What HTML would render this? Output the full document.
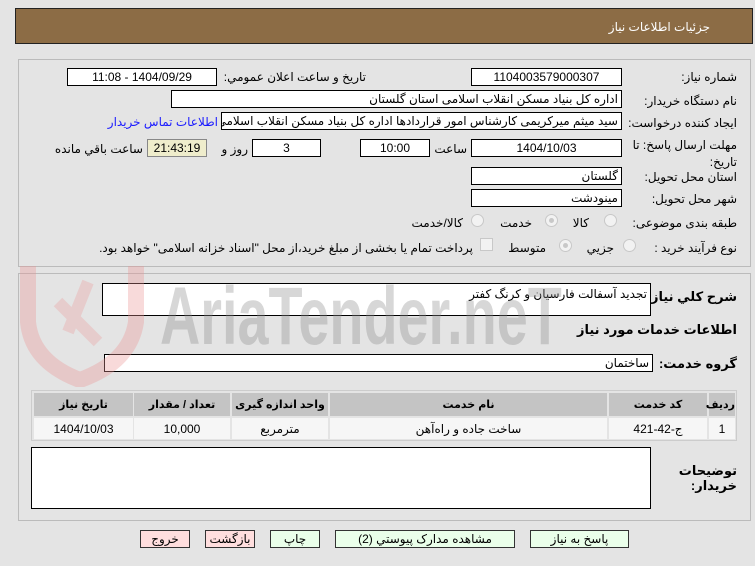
<!DOCTYPE html>
<html><head><meta charset="utf-8">
<style>
*{margin:0;padding:0;box-sizing:border-box}
body{width:755px;height:566px;background:#e4e4e4;position:relative;overflow:hidden;font-family:"Liberation Sans","DejaVu Sans",sans-serif;font-size:12px;color:#000}
.a{position:absolute}
.t{position:absolute;white-space:nowrap;direction:rtl;text-align:right}
.box{position:absolute;background:#fff;border:1px solid #000;white-space:nowrap;overflow:hidden;direction:rtl;font-size:12px;line-height:16px}
.c{text-align:center}
.r{padding-right:3px}
.rad{position:absolute;width:13px;height:13px;border-radius:50%;border:1px solid #c8c8c8;background:#f2f2f2}
.rad.on::after{content:"";position:absolute;left:3px;top:3px;width:5px;height:5px;border-radius:50%;background:#c8c8c8}
.btn{position:absolute;height:18px;border:1px solid #333;text-align:center;line-height:16px;font-size:12px;background:#eaffea;direction:rtl}
.btn.red{background:#ffdede}
</style></head><body>
<!-- header -->
<div class="a" style="left:15px;top:8px;width:738px;height:36px;background:#8c6c45;border:1px solid #222"></div>
<div class="t" style="right:45px;top:20px;color:#fff;font-size:12px">جزئيات اطلاعات نياز</div>

<!-- panel1 -->
<div class="a" style="left:18px;top:59px;width:733px;height:208px;border:1px solid #bbb"></div>

<div class="t" style="right:18px;top:70px">شماره نياز:</div>
<div class="box c" style="left:471px;top:68px;width:151px;height:18px">1104003579000307</div>
<div class="t" style="right:389px;top:70px">تاريخ و ساعت اعلان عمومي:</div>
<div class="box c" style="left:67px;top:68px;width:150px;height:18px">1404/09/29 - 11:08</div>

<div class="t" style="right:18px;top:94px">نام دستگاه خريدار:</div>
<div class="box r" style="left:171px;top:90px;width:451px;height:18px">اداره کل بنیاد مسکن انقلاب اسلامی استان گلستان</div>

<div class="t" style="right:18px;top:116px">ايجاد كننده درخواست:</div>
<div class="box r" style="left:221px;top:112px;width:401px;height:18px">سید میثم میرکریمی کارشناس امور قراردادها اداره کل بنیاد مسکن انقلاب اسلامی استان گلستان</div>
<div class="t" style="right:537px;top:115px;color:#1a1aff">اطلاعات تماس خريدار</div>

<div class="t" style="right:18px;top:137px;line-height:17px">مهلت ارسال پاسخ: تا<br>تاريخ:</div>
<div class="box c" style="left:471px;top:139px;width:151px;height:18px">1404/10/03</div>
<div class="t" style="right:288px;top:142px">ساعت</div>
<div class="box c" style="left:360px;top:139px;width:70px;height:18px">10:00</div>
<div class="box c" style="left:252px;top:139px;width:69px;height:18px">3</div>
<div class="t" style="right:507px;top:142px">روز و</div>
<div class="box c" style="left:147px;top:139px;width:60px;height:18px;background:#efedcc;border-color:#888">21:43:19</div>
<div class="t" style="right:612px;top:142px">ساعت باقي مانده</div>

<div class="t" style="right:18px;top:170px">استان محل تحويل:</div>
<div class="box r" style="left:471px;top:167px;width:151px;height:18px">گلستان</div>
<div class="t" style="right:18px;top:192px">شهر محل تحويل:</div>
<div class="box r" style="left:471px;top:189px;width:151px;height:18px">مينودشت</div>

<div class="t" style="right:18px;top:216px">طبقه بندی موضوعی:</div>
<div class="rad" style="left:604px;top:214px"></div>
<div class="t" style="right:166px;top:216px">كالا</div>
<div class="rad on" style="left:545px;top:214px"></div>
<div class="t" style="right:223px;top:216px">خدمت</div>
<div class="rad" style="left:471px;top:214px"></div>
<div class="t" style="right:292px;top:216px">كالا/خدمت</div>

<div class="t" style="right:18px;top:241px">نوع فرآيند خريد :</div>
<div class="rad" style="left:623px;top:239px"></div>
<div class="t" style="right:141px;top:241px">جزيي</div>
<div class="rad on" style="left:559px;top:239px"></div>
<div class="t" style="right:209px;top:241px">متوسط</div>
<div class="a" style="left:480px;top:238px;width:13px;height:13px;border:1px solid #c8c8c8;background:#f2f2f2"></div>
<div class="t" style="right:282px;top:241px">پرداخت تمام يا بخشی از مبلغ خريد،از محل "اسناد خزانه اسلامی" خواهد بود.</div>

<!-- panel2 -->
<div class="a" style="left:18px;top:273px;width:733px;height:248px;border:1px solid #bbb"></div>
<div class="t" style="right:18px;top:289px;font-weight:bold;font-size:13px">شرح كلي نياز:</div>
<div class="box" style="left:102px;top:283px;width:549px;height:33px;padding-right:3px;line-height:20px">تجدید آسفالت فارسیان و کرنگ کفتر</div>
<div class="t" style="right:18px;top:322px;font-weight:bold;font-size:13px">اطلاعات خدمات مورد نياز</div>
<div class="t" style="right:18px;top:356px;font-weight:bold;font-size:13px">گروه خدمت:</div>
<div class="box r" style="left:104px;top:354px;width:549px;height:18px">ساختمان</div>

<div class="a" style="left:31px;top:390px;width:706px;height:51px;border:1px solid #ccc;background:#e4e4e4"></div>
<div class="a" style="left:34px;top:393px;width:99px;height:23px;background:#c4c4c4"></div>
<div class="a" style="left:134px;top:393px;width:96px;height:23px;background:#c4c4c4"></div>
<div class="a" style="left:232px;top:393px;width:96px;height:23px;background:#c4c4c4"></div>
<div class="a" style="left:330px;top:393px;width:277px;height:23px;background:#c4c4c4"></div>
<div class="a" style="left:609px;top:393px;width:98px;height:23px;background:#c4c4c4"></div>
<div class="a" style="left:709px;top:393px;width:26px;height:23px;background:#c4c4c4"></div>
<div class="a" style="left:34px;top:418px;width:99px;height:21px;background:#f6f6f6"></div>
<div class="a" style="left:134px;top:418px;width:96px;height:21px;background:#f6f6f6"></div>
<div class="a" style="left:232px;top:418px;width:96px;height:21px;background:#f6f6f6"></div>
<div class="a" style="left:330px;top:418px;width:277px;height:21px;background:#f6f6f6"></div>
<div class="a" style="left:609px;top:418px;width:98px;height:21px;background:#f6f6f6"></div>
<div class="a" style="left:709px;top:418px;width:26px;height:21px;background:#f6f6f6"></div>
<div class="a c" style="left:34px;top:398px;width:99px;font-weight:bold;font-size:11px;direction:rtl">تاريخ نياز</div>
<div class="a c" style="left:134px;top:398px;width:96px;font-weight:bold;font-size:11px;direction:rtl">تعداد / مقدار</div>
<div class="a c" style="left:232px;top:398px;width:96px;font-weight:bold;font-size:11px;direction:rtl">واحد اندازه گيری</div>
<div class="a c" style="left:330px;top:398px;width:277px;font-weight:bold;font-size:11px;direction:rtl">نام خدمت</div>
<div class="a c" style="left:609px;top:398px;width:98px;font-weight:bold;font-size:11px;direction:rtl">کد خدمت</div>
<div class="a c" style="left:709px;top:398px;width:26px;font-weight:bold;font-size:11px;direction:rtl">رديف</div>
<div class="a c" style="left:34px;top:422px;width:99px">1404/10/03</div>
<div class="a c" style="left:134px;top:422px;width:96px">10,000</div>
<div class="a c" style="left:232px;top:422px;width:96px;direction:rtl">مترمربع</div>
<div class="a c" style="left:330px;top:422px;width:277px;direction:rtl">ساخت جاده و راه‌آهن</div>
<div class="a c" style="left:609px;top:422px;width:98px;direction:rtl">ج-42-421</div>
<div class="a c" style="left:709px;top:422px;width:26px">1</div>

<div class="box" style="left:31px;top:447px;width:620px;height:62px"></div>
<div class="t" style="right:18px;top:463px;font-weight:bold;font-size:13px;line-height:15px;text-align:right">توضيحات<br>خريدار:</div>

<!-- watermark -->
<svg class="a" style="left:18px;top:262px" width="130" height="125" viewBox="0 0 130 125">
<path d="M10 4 L10 60 Q14 100 62 118 Q112 100 118 60 L118 4" fill="none" stroke="rgba(235,150,150,0.35)" stroke-width="16"/>
<path d="M40 40 L80 80 M70 20 L50 70" stroke="rgba(235,150,150,0.3)" stroke-width="12"/>
</svg>
<div class="a" style="left:160px;top:276px;font-size:82px;font-weight:bold;color:rgba(140,140,140,0.35);transform:scaleX(0.68);transform-origin:left top;line-height:82px;white-space:nowrap">AriaTender.neT</div>

<div class="btn red" style="left:140px;top:530px;width:50px">خروج</div>
<div class="btn red" style="left:205px;top:530px;width:50px">بازگشت</div>
<div class="btn" style="left:270px;top:530px;width:50px">چاپ</div>
<div class="btn" style="left:335px;top:530px;width:180px">مشاهده مدارک پيوستي (2)</div>
<div class="btn" style="left:530px;top:530px;width:99px">پاسخ به نياز</div>
</body></html>
